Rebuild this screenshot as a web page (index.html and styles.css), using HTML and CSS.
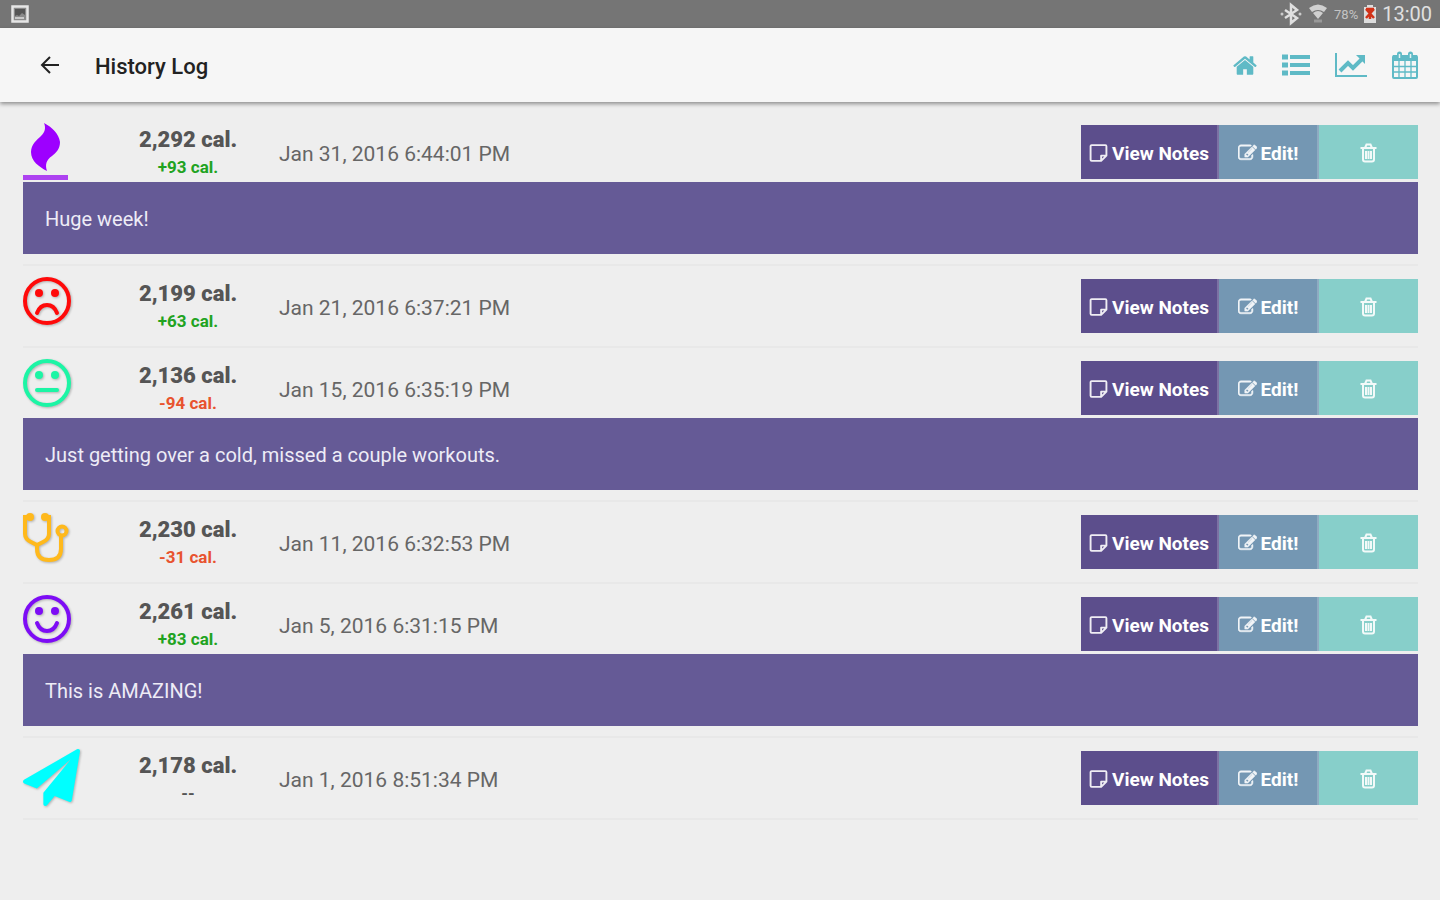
FILE: index.html
```
<!DOCTYPE html>
<html lang="en">

<head>
    <meta charset="UTF-8">
    <meta name="viewport" content="width=device-width, initial-scale=1.0">
    <title>History Log</title>
    <link rel="stylesheet" href="styles.css">
</head>

<body>
    <svg class="sprite" aria-hidden="true">
        <symbol id="icon-note" viewBox="0 0 18 18">
            <path d="M2.500 1.500h13a1 1 0 0 1 1 1v9l-5 5h-9a1 1 0 0 1-1-1v-13a1 1 0 0 1 1-1zM11.500 16v-4.500h4.500" fill="none" stroke="currentColor" stroke-width="1.800" stroke-linejoin="round" />
        </symbol>
        <symbol id="icon-edit" viewBox="0 0 1792 1792">
            <path fill="currentColor" stroke="currentColor" stroke-width="50" d="M888 1184l116-116-152-152-116 116v56h96v96h56zm440-720q-16-16-33 1l-350 350q-17 17-1 33t33-1l350-350q17-17 1-33zm80 594v190q0 119-84.500 203.500t-203.500 84.500h-832q-119 0-203.500-84.500t-84.500-203.500v-832q0-119 84.500-203.500t203.500-84.500h832q63 0 117 25 15 7 18 23 3 17-9 29l-49 49q-14 14-32 8-23-6-45-6h-832q-66 0-113 47t-47 113v832q0 66 47 113t113 47h832q66 0 113-47t47-113v-126q0-13 9-22l64-64q15-15 35-7t20 29zm-96-738l288 288-672 672h-288v-288zm444 132l-92 92-288-288 92-92q28-28 68-28t68 28l152 152q28 28 28 68t-28 68z" />
        </symbol>
        <symbol id="icon-trash" viewBox="0 0 18 20">
            <path d="M1 5h16M5.500 5l1.500-3.500h4l1.500 3.500M3.500 5v11.500a2 2 0 0 0 2 2h7a2 2 0 0 0 2-2v-11.500M6.500 8v8M9 8v8M11.500 8v8" fill="none" stroke="currentColor" stroke-width="2" />
        </symbol>
        <symbol id="icon-face" viewBox="0 0 48 48">
            <circle cx="24" cy="24" r="22" fill="none" stroke="currentColor" stroke-width="4" />
            <circle cx="16" cy="16" r="4" fill="currentColor" />
            <circle cx="32" cy="16" r="4" fill="currentColor" />
        </symbol>
    </svg>

    <div class="status-bar">
        <svg class="status-icon" viewBox="0 0 18 18" width="18" height="20" aria-hidden="true">
            <rect x="1.500" y="1.500" width="15" height="15" fill="#8a8a8a" stroke="#e6e6e6" stroke-width="2.500" />
            <path d="M4 4h10v6l-3-2-3 3-2-1-2 1z" fill="#555" />
            <path d="M4 13h9" stroke="#ddd" stroke-width="1.500" />
        </svg>
        <div class="status-right">
            <svg viewBox="0 0 22 24" width="22" height="24" aria-hidden="true">
                <path d="M5 8l12 8-6 5V3l6 5L5 16" fill="none" stroke="#e0e0e0" stroke-width="2.500" />
                <circle cx="2" cy="12" r="1.500" fill="#ccc" />
                <circle cx="20" cy="12" r="1.500" fill="#ccc" />
            </svg>
            <svg class="wifi" viewBox="0 0 20 22" width="20" height="22" aria-hidden="true">
                <path d="M1 5q9-7 18 0l-3 4q-6-4-12 0zM5 10q5-4 10 0l-5 6z" fill="#d0d0d0" />
                <path d="M6 18h8" stroke="#999" stroke-width="3" />
            </svg>
            <span class="percent">78%</span>
            <svg class="battery" viewBox="0 0 12 20" width="12" height="20" aria-hidden="true">
                <path d="M3 1h6v2h3v16H0V3h3z" fill="#ddd" />
                <path d="M2 5l8 9M10 5l-8 9M2 5h8M6 5v10" stroke="#d23218" stroke-width="2.500" />
            </svg>
            <span class="clock">13:00</span>
        </div>
    </div>

    <header class="header">
        <button class="back" aria-label="Back">
            <svg viewBox="0 0 20 20" width="20" height="20">
                <path d="M19 10H2M10 2L2 10l8 8" fill="none" stroke="currentColor" stroke-width="2" />
            </svg>
        </button>
        <h1>History Log</h1>
        <nav class="nav">
            <a href="#" aria-label="Home">
                <svg viewBox="64 192 1664 1408" width="24" height="21">
                    <path fill="currentColor" d="M1472 992v480q0 26-19 45t-45 19h-384v-384h-256v384h-384q-26 0-45-19t-19-45v-480q0-1 .5-3t.5-3l575-474 575 474q1 2 1 6zm223-69l-62 74q-8 9-21 11h-3q-13 0-21-7l-692-577-692 577q-12 8-24 7-13-2-21-11l-62-74q-8-10-7-23.500t11-21.500l719-599q32-26 76-26t76 26l244 204v-195q0-14 9-23t23-9h192q14 0 23 9t9 23v408l219 182q10 8 11 21.500t-7 23.500z" />
                </svg>
            </a>
            <a href="#" aria-label="List">
                <svg viewBox="0 0 28 22" width="28" height="22">
                    <path d="M0 3h6M0 11h6M0 19h6" stroke="currentColor" stroke-width="5" />
                    <path d="M8 3h20M8 11h20M8 19h20" stroke="currentColor" stroke-width="4" />
                </svg>
            </a>
            <a href="#" aria-label="Chart">
                <svg viewBox="0 0 32 24" width="32" height="24">
                    <path d="M1 0v23h31" fill="none" stroke="currentColor" stroke-width="2" />
                    <path d="M5 18l8-8 5 5 9-9" fill="none" stroke="currentColor" stroke-width="4" />
                    <path d="M21 2h9v9z" fill="currentColor" />
                </svg>
            </a>
            <a href="#" aria-label="Calendar">
                <svg viewBox="0 0 26 28" width="26" height="28">
                    <rect x="1" y="5" width="24" height="22" rx="1" fill="none" stroke="currentColor" stroke-width="2" />
                    <path d="M1 4h24v6H1z" fill="currentColor" />
                    <path d="M7 10v17M13 10v17M19 10v17M1 15.500h24M1 21h24" stroke="currentColor" stroke-width="1.300" />
                    <path d="M7.500 3v4M18.500 3v4" stroke="currentColor" stroke-width="5" stroke-linecap="round" />
                    <path d="M7.500 3v4M18.500 3v4" stroke="#e4f2f4" stroke-width="1.500" />
                </svg>
            </a>
        </nav>
    </header>

    <main class="log">
        <article class="entry">
            <div class="row">
                <svg class="mood flame" viewBox="0 0 45 57" width="45" height="57" aria-hidden="true">
                    <path d="M21 0c8 4 15 11 16 19 0 7-4 11-8 14-6 4-7 9-5 15-8-4-16-10-16-19 0-8 6-12 10-16 4-4 5-8 3-13z" fill="#9d00ff" />
                    <path d="M0 52h45v5H0z" fill="#ad42f0" />
                </svg>
                <div class="calories">
                    <strong>2,292 cal.</strong>
                    <span class="up">+93 cal.</span>
                </div>
                <time>Jan 31, 2016 6:44:01 PM</time>
                <div class="actions">
                    <button class="view"><svg><use href="#icon-note" /></svg>View Notes</button>
                    <button class="edit"><svg><use href="#icon-edit" /></svg>Edit!</button>
                    <button class="delete" aria-label="Delete"><svg><use href="#icon-trash" /></svg></button>
                </div>
            </div>
            <p class="note">Huge week!</p>
        </article>

        <article class="entry">
            <div class="row">
                <svg class="mood sad" viewBox="0 0 48 48" width="48" height="48" aria-hidden="true">
                    <use href="#icon-face" />
                    <path d="M14 36q3-8 10-8t10 8" fill="none" stroke="currentColor" stroke-width="4" stroke-linecap="round" />
                </svg>
                <div class="calories">
                    <strong>2,199 cal.</strong>
                    <span class="up">+63 cal.</span>
                </div>
                <time>Jan 21, 2016 6:37:21 PM</time>
                <div class="actions">
                    <button class="view"><svg><use href="#icon-note" /></svg>View Notes</button>
                    <button class="edit"><svg><use href="#icon-edit" /></svg>Edit!</button>
                    <button class="delete" aria-label="Delete"><svg><use href="#icon-trash" /></svg></button>
                </div>
            </div>
        </article>

        <article class="entry">
            <div class="row">
                <svg class="mood neutral" viewBox="0 0 48 48" width="48" height="48" aria-hidden="true">
                    <use href="#icon-face" />
                    <path d="M14 31h20" stroke="currentColor" stroke-width="4" stroke-linecap="round" />
                </svg>
                <div class="calories">
                    <strong>2,136 cal.</strong>
                    <span class="down">-94 cal.</span>
                </div>
                <time>Jan 15, 2016 6:35:19 PM</time>
                <div class="actions">
                    <button class="view"><svg><use href="#icon-note" /></svg>View Notes</button>
                    <button class="edit"><svg><use href="#icon-edit" /></svg>Edit!</button>
                    <button class="delete" aria-label="Delete"><svg><use href="#icon-trash" /></svg></button>
                </div>
            </div>
            <p class="note">Just getting over a cold, missed a couple workouts.</p>
        </article>

        <article class="entry">
            <div class="row">
                <svg class="mood sick" viewBox="0 0 46 50" width="46" height="50" aria-hidden="true">
                    <path d="M6 4H2v17q0 5 6 8l6 3 6-3q6-3 6-8V4h-4M14 32v4q0 11 12 11t12-11V22" fill="none" stroke="currentColor" stroke-width="4" />
                    <circle cx="7" cy="4" r="4" fill="currentColor" />
                    <circle cx="22" cy="4" r="4" fill="currentColor" />
                    <circle cx="39" cy="18" r="4.500" fill="none" stroke="currentColor" stroke-width="4" />
                </svg>
                <div class="calories">
                    <strong>2,230 cal.</strong>
                    <span class="down">-31 cal.</span>
                </div>
                <time>Jan 11, 2016 6:32:53 PM</time>
                <div class="actions">
                    <button class="view"><svg><use href="#icon-note" /></svg>View Notes</button>
                    <button class="edit"><svg><use href="#icon-edit" /></svg>Edit!</button>
                    <button class="delete" aria-label="Delete"><svg><use href="#icon-trash" /></svg></button>
                </div>
            </div>
        </article>

        <article class="entry">
            <div class="row">
                <svg class="mood happy" viewBox="0 0 48 48" width="48" height="48" aria-hidden="true">
                    <use href="#icon-face" />
                    <path d="M14 28q3 8 10 8t10-8" fill="none" stroke="currentColor" stroke-width="4" stroke-linecap="round" />
                </svg>
                <div class="calories">
                    <strong>2,261 cal.</strong>
                    <span class="up">+83 cal.</span>
                </div>
                <time>Jan 5, 2016 6:31:15 PM</time>
                <div class="actions">
                    <button class="view"><svg><use href="#icon-note" /></svg>View Notes</button>
                    <button class="edit"><svg><use href="#icon-edit" /></svg>Edit!</button>
                    <button class="delete" aria-label="Delete"><svg><use href="#icon-trash" /></svg></button>
                </div>
            </div>
            <p class="note">This is AMAZING!</p>
        </article>

        <article class="entry">
            <div class="row">
                <svg class="mood start" viewBox="0 0 1792 1792" width="57" height="57" aria-hidden="true">
                    <path fill="currentColor" d="M1764 11q33 24 27 64l-256 1536q-5 29-32 45-14 8-31 8-11 0-24-5l-453-185-242 295q-18 23-49 23-13 0-22-4-19-7-30.500-23.500t-11.500-36.500v-349l864-1059-1069 925-395-162q-37-14-40-55-2-40 32-59l1664-960q15-9 32-9 20 0 36 11z" />
                </svg>
                <div class="calories">
                    <strong>2,178 cal.</strong>
                    <span>--</span>
                </div>
                <time>Jan 1, 2016 8:51:34 PM</time>
                <div class="actions">
                    <button class="view"><svg><use href="#icon-note" /></svg>View Notes</button>
                    <button class="edit"><svg><use href="#icon-edit" /></svg>Edit!</button>
                    <button class="delete" aria-label="Delete"><svg><use href="#icon-trash" /></svg></button>
                </div>
            </div>
        </article>
    </main>
</body>

</html>
```

FILE: styles.css
```
* {
    box-sizing: border-box;
}

body {
    margin: 0;
    min-height: 100vh;
    background: #eeeeee;
    color: #555;
    font-family: Roboto, 'Liberation Sans', sans-serif;
    font-size: 21px;
}

.sprite {
    display: none;
}

.status-bar {
    display: flex;
    align-items: center;
    justify-content: space-between;
    height: 28px;
    padding: 0 8px 0 11px;
    background: #757575;
    color: #e0e0e0;
}

.status-right {
    display: flex;
    align-items: center;
    gap: 6px;
}

.percent {
    color: #c4c4c4;
    font-size: 13px;
}

.clock {
    font-size: 20px;
    line-height: 30px;
}

.header {
    position: relative;
    display: flex;
    align-items: center;
    height: 74px;
    padding: 0 22px 0 40px;
    background: #f6f6f6;
    box-shadow: 0 2px 4px rgba(0, 0, 0, 0.4);
}

.header h1 {
    margin: 0;
    padding-top: 3px;
    color: #222;
    font-size: 22px;
    font-weight: 500;
    line-height: 28px;
}

.back {
    display: flex;
    width: 55px;
    padding: 0;
    border: none;
    background: none;
    color: #222;
    cursor: pointer;
}

.nav {
    display: flex;
    align-items: center;
    gap: 25px;
    margin-left: auto;
}

.nav a {
    display: flex;
    color: #5fbac6;
}

.log {
    padding: 10px 22px 10px 23px;
}

.entry {
    padding: 13px 0 10px;
    border-bottom: 2px solid #e8e8e8;
}

.row {
    display: grid;
    grid-template-columns: 96px 138px 1fr auto;
    height: 57px;
}

.mood {
    margin-top: -2px;
    filter: drop-shadow(1px 1px 1px rgba(0, 0, 0, 0.25));
}

.flame {
    filter: none;
}

.sad {
    color: #ff0a0a;
}

.neutral {
    color: #1cf5a5;
}

.sick {
    color: #ffb91c;
}

.happy {
    color: #7d0cf5;
}

.start {
    color: #00ffff;
}

.calories {
    text-align: center;
    font-size: 17px;
    font-weight: bold;
    line-height: 24px;
}

.calories strong {
    display: block;
    font-size: 22px;
    line-height: 30px;
}

.up {
    color: #21a321;
}

.down {
    color: #e8532f;
}

time {
    padding-left: 22px;
    color: #666;
    line-height: 58px;
}

.actions {
    display: flex;
    height: 54px;
}

.actions button {
    display: flex;
    align-items: center;
    justify-content: center;
    gap: 4px;
    width: 100px;
    padding: 2px 0 0;
    border: none;
    border-right: 2px solid rgba(255, 255, 255, 0.2);
    color: #fff;
    font-family: inherit;
    font-size: 19px;
    font-weight: bold;
    cursor: pointer;
}

.actions svg {
    width: 19px;
    height: 20px;
    opacity: 0.9;
}

.actions .view {
    width: 138px;
    background: #5c4e8c;
}

.actions .edit {
    background: #7497b3;
}

.actions .delete {
    width: 99px;
    border-right: none;
    background: #87cfca;
}

.note {
    margin: 0;
    padding: 23px 22px 21px;
    background: #655a96;
    color: #eeecf6;
    font-size: 20px;
    line-height: 28px;
}
```
